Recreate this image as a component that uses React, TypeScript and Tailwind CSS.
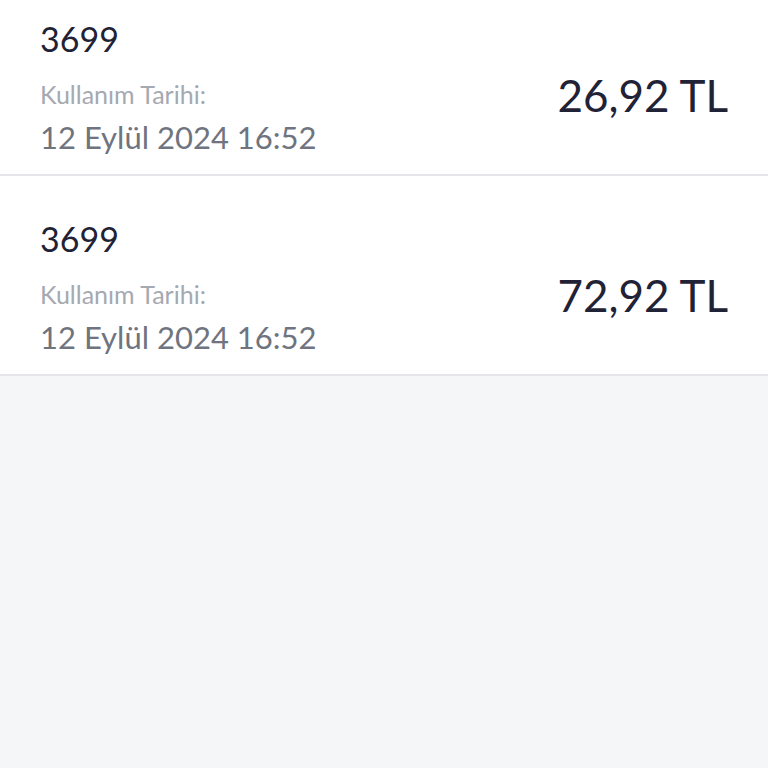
const items = [
  { code: '3699', date: '12 Eylül 2024 16:52', amount: '26,92 TL' },
  { code: '3699', date: '12 Eylül 2024 16:52', amount: '72,92 TL' },
]

function UsageRow({ code, date, amount }: { code: string; date: string; amount: string }) {
  return (
    <div className="flex h-[200px] items-start justify-between border-b-2 border-[#e4e6ea] bg-white pl-10 pr-10">
      <div className="flex flex-col pt-[43px]">
        <span className="text-[34px] leading-[40px] text-[#1f2335]">{code}</span>
        <span className="mt-[19px] text-[25px] leading-[32px] text-[#a5a9b2]">Kullanım Tarihi:</span>
        <span className="mt-[8px] text-[31px] leading-[38px] text-[#6f7480]">{date}</span>
      </div>
      <span className="mt-[93px] text-[44px] leading-[52px] text-[#1f2335]">{amount}</span>
    </div>
  )
}

export default function App() {
  return (
    <div className="h-[768px] overflow-hidden bg-[#f5f6f8] font-['Lato',sans-serif]">
      <div className="-mt-[24px]">
        {items.map((item, i) => (
          <UsageRow key={i} {...item} />
        ))}
      </div>
    </div>
  )
}
